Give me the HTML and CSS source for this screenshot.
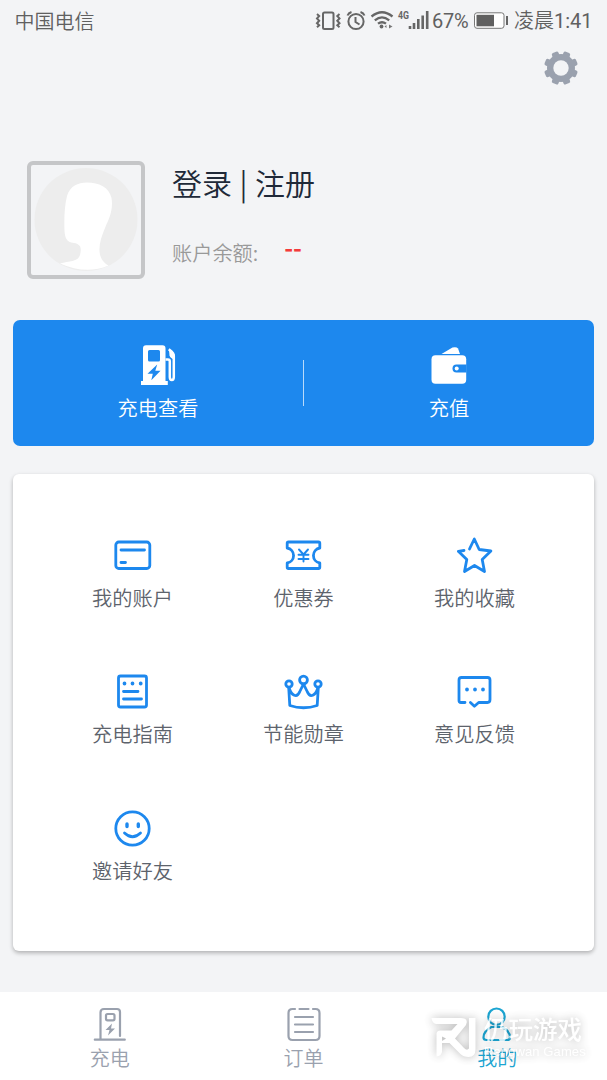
FILE: index.html
```html
<!DOCTYPE html>
<html lang="zh-CN">
<head>
<meta charset="utf-8">
<title>我的</title>
<link rel="stylesheet" href="styles.css">
</head>
<body>
<div class="screen">
  <header class="status">
    <span class="carrier">中国电信</span>
    <svg class="signals" width="116" height="24" viewBox="314 9 116 24" fill="none" stroke="#666" stroke-width="2">
      <rect x="323" y="12.500" width="10.500" height="16.500" rx="1.500"/>
      <path d="M317 14l2.200 2-2.200 2.400 2.200 2.400-2.200 2.400 2.200 2-2.200 2M339.500 14l-2.200 2 2.200 2.400-2.200 2.400 2.200 2.400-2.200 2 2.200 2"/>
      <circle cx="356" cy="21.500" r="7.600"/>
      <path d="M355.500 17v5l4 2.500M347.500 15.500q1-2.500 4-3.500M364.500 15.500q-1-2.500-4-3.500"/>
      <path d="M371.500 16.500q10.500-8.500 21 0M374.800 20.300q7.200-5.800 14.400 0M378 23.700q4-3 8 0" stroke-width="2.300"/>
      <path d="M384.500 26.500l2-1.500v3zM389 24.500l3.500 2-3.500 2z" fill="#777" stroke="none"/>
      <circle cx="381.500" cy="26.500" r="1.900" fill="#666" stroke="none"/>
      <text class="network" x="398" y="18.500" textLength="11" lengthAdjust="spacingAndGlyphs">4G</text>
      <path d="M410 26v3M414 23v6M418.300 19v10M422.700 15.500v13.500M427.200 11v18" stroke-width="2.600"/>
    </svg>
    <span class="percent">67%</span>
    <svg class="battery" width="36" height="18" viewBox="473 12 36 18">
      <rect x="474.500" y="12.800" width="29.500" height="15.500" rx="2.500" fill="#fff" stroke="#777"/>
      <rect x="476.500" y="14.800" width="17.500" height="11.500" fill="#606060"/>
      <path d="M507 16v9" stroke="#666" stroke-width="2"/>
    </svg>
    <span class="clock">凌晨<span class="digits">1:41</span></span>
  </header>

  <div class="toolbar">
    <svg width="36" height="36" viewBox="-18 -18 36 36" fill="#9aa1ae">
      <circle r="14"/>
      <rect id="tooth" x="-3.500" y="-17" width="7" height="34" rx="1.800" transform="rotate(22.500)"/>
      <use href="#tooth" transform="rotate(45)"/>
      <use href="#tooth" transform="rotate(90)"/>
      <use href="#tooth" transform="rotate(135)"/>
      <circle r="7.700" fill="#f3f4f6"/>
    </svg>
  </div>

  <section class="profile">
    <div class="avatar">
      <svg width="110" height="110" viewBox="31 166 110 110">
        <circle cx="86" cy="220.500" r="51.500" fill="#ededed"/>
        <path d="M60 264.500C69 262 78 263 80 256C82 248 80 245 74 244C66 243.500 65 238 64.500 232C64 220 64.500 207 67 197C70 187 78 183.500 87 183.500C99 183.500 109 188 111.500 199C113.500 211 109 220 105 229C99 243 95 259 108.500 266.500Q86 276 60 264.500Z" fill="#fff"/>
      </svg>
    </div>
    <div class="account">
      <h1 class="login">登录 | 注册</h1>
      <p class="balance">账户余额:<span class="amount">--</span></p>
    </div>
  </section>

  <section class="actions">
    <div class="action">
      <svg width="40" height="42" viewBox="138 345 40 42" fill="#fff">
        <path fill-rule="evenodd" d="M146 346.300h16.500q3 0 3 3V382h2.300v4H141v-4h2v-32.700q0-3 3-3zM149.500 351q-1.500 0-1.500 1.500v8.500q0 1.500 1.500 1.500h9q1.500 0 1.500-1.500v-8.500q0-1.500-1.500-1.500zM157.200 365.500l-9.700 9.300h5.300l-1.500 6.400 9.200-9.400h-5.200z"/>
        <path d="M165.500 360.500h2.500q1.800 0 1.800 2v15.500q0 3 2 3t2-3V357q0-2.500-2-4.200l-3-2.500" fill="none" stroke="#fff" stroke-width="2.500"/>
        <path d="M169 350.500l5.800 5v5q-4.300-1-5.300-4z"/>
      </svg>
      <span class="action-label">充电查看</span>
    </div>
    <div class="divider"></div>
    <div class="action">
      <svg width="40" height="42" viewBox="428.500 345 40 42">
        <path d="M441 355l11-6.500q4-1 5.500 1l2 5.500z" fill="#fff"/>
        <rect x="431" y="356.300" width="34.700" height="28.500" rx="4" fill="#fff"/>
        <path d="M466 365.500h-10a4 4 0 0 0 0 8h10z" fill="#1d88ee"/>
        <circle cx="456.200" cy="369.500" r="2" fill="#fff"/>
      </svg>
      <span class="action-label">充值</span>
    </div>
  </section>

  <section class="menu">
    <div class="item">
      <svg class="icon" viewBox="113 535 40 40">
        <rect x="115.800" y="542" width="34" height="26.500" rx="3"/>
        <path d="M121 550h23.500M121 562.500h4.500"/>
      </svg>
      <span>我的账户</span>
    </div>
    <div class="item">
      <svg class="icon" viewBox="284 535 40 40">
        <path d="M288.500 542h30q1.300 0 1.300 1.300v4.700a7.600 7.600 0 0 0 0 15v4.200q0 1.300-1.300 1.300h-30q-1.300 0-1.300-1.300V563a7.600 7.600 0 0 0 0-15v-4.700q0-1.300 1.300-1.300z"/>
        <path d="M299 549.500l4.500 5 4.500-5M298.500 554.700h10M298.500 559h10M303.500 554.500v7" stroke-width="1.900"/>
      </svg>
      <span>优惠券</span>
    </div>
    <div class="item">
      <svg class="icon" viewBox="455 535 40 40">
        <path d="M464 550.500l-5.700.8 8.500 8.200-2.300 12 10-6 10 6-2.300-12 8.700-8.500-11.700-1.500-4.900-10.500-4.800 10"/>
      </svg>
      <span>我的收藏</span>
    </div>
    <div class="item">
      <svg class="icon" viewBox="113 671.500 40 40">
        <rect x="118.500" y="676.500" width="28" height="31" rx="2"/>
        <path d="M123.500 692h14.500M123.500 699.500h18"/>
        <path class="dots" d="M124.500 684h0M132.500 684h0M140.700 684h0"/>
      </svg>
      <span>充电指南</span>
    </div>
    <div class="item">
      <svg class="icon" viewBox="284 671.500 40 40">
        <circle cx="289" cy="684.500" r="3.200"/>
        <circle cx="303.500" cy="680.500" r="3.900"/>
        <circle cx="318" cy="684.500" r="3.200"/>
        <path d="M288.700 688l1.100 18q13.700 4.500 27.400 0l1.100-18M289 688c2.500 8.500 8 11 10.800 4l3.700-7.500 3.700 7.500c2.800 7 8.300 4.500 10.800-4"/>
      </svg>
      <span>节能勋章</span>
    </div>
    <div class="item">
      <svg class="icon" viewBox="455 671.500 40 40">
        <path d="M465 703h-4q-2 0-2-2v-20.500q0-2.500 2.500-2.500h26q2.500 0 2.500 2.500V700q0 3-2.500 3h-8.800l-4.300 3.700-4-3.700"/>
        <path class="dots" d="M467 690h0M475 690h0M483 690h0"/>
      </svg>
      <span>意见反馈</span>
    </div>
    <div class="item">
      <svg class="icon" viewBox="113 808 40 40">
        <circle cx="132.500" cy="828.500" r="16.700"/>
        <path d="M124.500 833q8 7.500 16 0"/>
        <path d="M127 824v2.500M138.300 824v2.500" stroke-width="3.400"/>
      </svg>
      <span>邀请好友</span>
    </div>
  </section>

  <nav class="tabs">
    <div class="tab">
      <svg class="tab-icon" viewBox="90 1005 40 38">
        <path d="M94.800 1039.700h30M100.500 1039.500v-27q0-3.500 3.500-3.500h13q3 0 3 3v24"/>
        <rect x="106" y="1014" width="8.500" height="6.300" rx="1.500"/>
        <path d="M112 1023.500l-6.500 6.500h4l-1.500 5.500 7-7h-4z" fill="#9aa1ae" stroke="none"/>
      </svg>
      <span>充电</span>
    </div>
    <div class="tab">
      <svg class="tab-icon" viewBox="283.500 1005 40 38">
        <path d="M294.500 1009h-2.500q-4 0-4 4v23q0 4 4 4h23q4 0 4-4v-23q0-4-4-4h-2.500M299 1009h9M294.500 1017h18M294.500 1024.500h18M294.500 1032h18"/>
      </svg>
      <span>订单</span>
    </div>
    <div class="tab active">
      <svg class="tab-icon" viewBox="477 1005 40 38">
        <circle cx="496.500" cy="1016.700" r="8.200"/>
        <path d="M491.500 1027q-8 4-8 10.500 0 2.500 3 2.500h20.500q3 0 3-2.500 0-6.500-8-10.500z"/>
      </svg>
      <span>我的</span>
    </div>
  </nav>

  <div class="watermark">
    <svg width="46" height="40" viewBox="431 1018 46 40" fill="#fff">
      <path fill-rule="evenodd" d="M431.500 1019H461q8 0 5 7l-11 13.500 9 9.500q3 3 5 0.500V1019h6.500v31q0 8-7 8-5 0-8-3l-11-11-7.500 0v9q-1 4-5.500 4.500V1035q0-3.500 4-3.500h11l6-6.500H436q-4-1-4.500-6zM442 1037.500v4.500l4-2.500z"/>
    </svg>
    <div class="watermark-text">
      <span class="watermark-name">仍玩游戏</span>
      <span class="watermark-sub">Rengwan Games</span>
    </div>
  </div>
</div>
</body>
</html>
```
FILE: styles.css
```css
* { box-sizing: border-box; }

body {
  margin: 0;
  background: #f3f4f6;
  font-family: "Noto Sans CJK SC", sans-serif;
  font-weight: 350;
}

svg { display: block; flex: none; }

.screen {
  position: relative;
  display: flex;
  flex-direction: column;
  width: 607px;
  height: 1080px;
  overflow: hidden;
}

.status {
  display: flex;
  align-items: center;
  height: 42px;
  padding: 0 14px 0 14.500px;
  color: #606060;
  font-size: 20px;
  line-height: 40px;
}

.carrier { flex: 1; }
.signals { margin-right: 1px; }
.percent, .digits { font-family: Roboto, sans-serif; font-weight: 400; }
.percent { width: 42px; padding-left: 1px; letter-spacing: -.2px; }
.network { font: 700 10.500px Roboto, sans-serif; fill: #666; stroke: none; }
.battery { margin-right: 5px; }
.clock { width: 79px; white-space: nowrap; }

.toolbar {
  display: flex;
  justify-content: flex-end;
  height: 119.500px;
  padding: 8px 28px 0 0;
}

.profile {
  display: flex;
  gap: 27px;
  height: 158.500px;
  padding-left: 27px;
}

.avatar {
  width: 118px;
  height: 118px;
  border: 4px solid #c5c6c8;
  border-radius: 6px;
}

.login {
  margin: 0;
  color: #202938;
  font-size: 30px;
  font-weight: 350;
  line-height: 42px;
  word-spacing: .8px;
}

.balance {
  margin: 35px 0 0;
  color: #999;
  font-size: 20.200px;
  line-height: 30px;
}

.amount {
  display: inline-block;
  margin-left: 26px;
  color: #f43b3b;
  font-size: 24px;
  font-weight: 700;
  line-height: 20px;
  transform: translateY(-4px);
}

.actions {
  display: flex;
  align-items: center;
  height: 126.500px;
  margin: 0 13px;
  border-radius: 7px;
  background: #1d88ee;
}

.action {
  display: flex;
  flex: 1;
  flex-direction: column;
  align-items: center;
  gap: 7px;
  padding-top: 1.500px;
  color: #fff;
}

.action-label { font-size: 20.200px; line-height: 30px; }
.divider { width: 1px; height: 46px; background: #b9dafa; }

.menu {
  display: grid;
  grid-template-columns: repeat(3, 171px);
  grid-auto-rows: 136.700px;
  justify-content: center;
  height: 477.500px;
  margin: 27.500px 13px 0;
  padding-top: 61px;
  border-radius: 6px;
  background: #fff;
  box-shadow: 0 2px 4px rgba(0, 0, 0, .28);
}

.item {
  display: flex;
  flex-direction: column;
  align-items: center;
  gap: 8px;
  color: #5d636c;
  font-size: 20.200px;
  line-height: 30px;
}

.icon {
  width: 40px;
  height: 40px;
  fill: none;
  stroke: #1d88ee;
  stroke-width: 2.800;
  stroke-linecap: round;
  stroke-linejoin: round;
}

.dots { stroke-width: 3.800; }

.tabs {
  display: flex;
  height: 88.500px;
  margin-top: 40.500px;
  padding: 13px 13px 0;
  background: #fff;
}

.tab {
  display: flex;
  flex: 1;
  flex-direction: column;
  align-items: center;
  gap: 1px;
  color: #9aa1ae;
  font-size: 20px;
  line-height: 28px;
}

.tab-icon {
  width: 40px;
  height: 38px;
  fill: none;
  stroke: currentColor;
  stroke-width: 2.200;
  stroke-linecap: round;
}

.tab.active { color: #1ca5d2; }

.watermark {
  position: absolute;
  left: 431px;
  top: 1014px;
  display: flex;
  align-items: center;
  gap: 7px;
  color: #fff;
  opacity: .8;
  filter: drop-shadow(0 0 5px rgba(0, 0, 0, .36));
}

.watermark-text { display: flex; flex-direction: column; }
.watermark-name { font-size: 24.500px; font-weight: 500; line-height: 30px; }
.watermark-sub { font: 13px/16px "Liberation Sans", sans-serif; letter-spacing: .1px; white-space: nowrap; }
```
